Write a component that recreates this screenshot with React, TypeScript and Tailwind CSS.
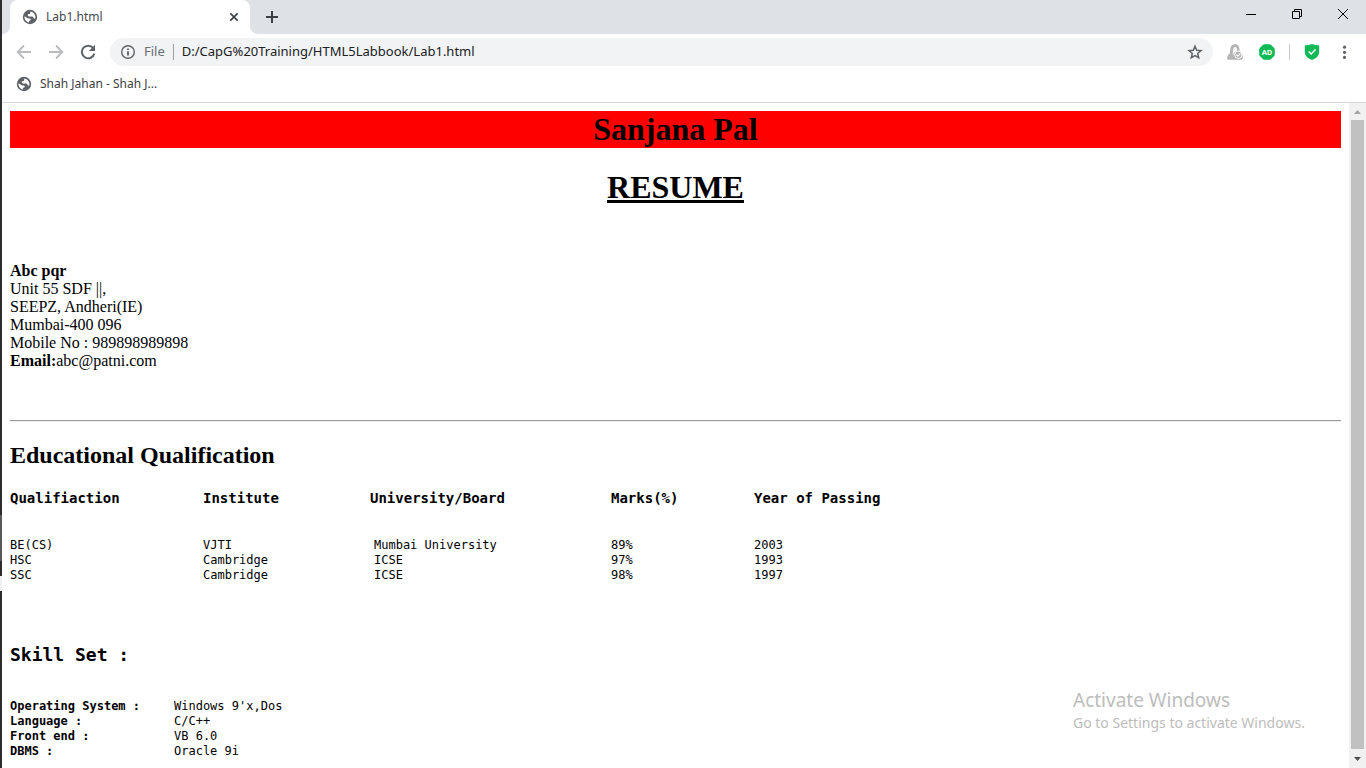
import React from "react";

const ui = "font-['Noto_Sans','Open_Sans',sans-serif]";
const serif = "font-['Liberation_Serif',serif]";
const mono = "font-['DejaVu_Sans_Mono',monospace]";

function Globe() {
  return (
    <svg width="16" height="16" viewBox="0 0 16 16" aria-hidden="true" className="shrink-0">
      <circle cx="8" cy="8" r="7.2" fill="#5f6368" />
      <path
        d="M8.400 2.500c-.3.700-.2 1.200-.2 1.700 0 .6-.4.900-1.100.9-.8 0-1.200.4-1.300 1-.1.700.4 1.400 1.200 1.400h2.500c1.100 0 1.700.3 2 1.200.2.700.9 1.100 1.700.9.3-.8.300-1.700.1-2.600-.7-2.700-2.800-4.300-4.900-4.500zM2.500 7.300c-.3 3.400 2 5.900 4.500 6.200 0-1.400.1-1.800.7-1.900.6-.1.900-.3 1-.9.100-.7-.4-1.300-1.200-1.300h-1c-.6 0-.8-.2-1.300-.5z"
        fill="#fff"
      />
    </svg>
  );
}

function Arrow({ flip }: { flip?: boolean }) {
  return (
    <svg width="16" height="16" viewBox="0 0 16 16" fill="none" stroke="#babcbe" strokeWidth="1.9" aria-hidden="true" className={flip ? "rotate-180" : ""}>
      <path d="M15 8H2.500M8 1.500 1.700 8 8 14.500" />
    </svg>
  );
}

function TabStrip() {
  return (
    <header className="flex h-[34px] shrink-0 items-stretch bg-[#dee1e6]">
      <div className="w-2 shrink-0 bg-white">
        <div className="h-full rounded-br-lg bg-[#dee1e6]" />
      </div>
      <div className="flex w-60 shrink-0 items-center gap-2 rounded-t-lg bg-white pr-2 pl-3">
        <Globe />
        <span className="flex-1 text-xs text-[#45494d]">Lab1.html</span>
        <button aria-label="Close tab" className="flex size-4 items-center justify-center">
          <svg width="8" height="8" viewBox="0 0 8 8" stroke="#3c4043" strokeWidth="1.600" aria-hidden="true">
            <path d="M.3.3l7.400 7.400M7.700.3L.3 7.700" />
          </svg>
        </button>
      </div>
      <div className="w-2 shrink-0 bg-white">
        <div className="h-full rounded-bl-lg bg-[#dee1e6]" />
      </div>
      <button aria-label="New tab" className="flex w-7 items-center justify-center">
        <svg width="12" height="12" viewBox="0 0 12 12" stroke="#3c4043" strokeWidth="2" aria-hidden="true">
          <path d="M6 0v12M0 6h12" />
        </svg>
      </button>
      <div className="ml-auto flex h-7">
        <button aria-label="Minimize" className="flex w-[46px] items-center justify-center">
          <svg width="10" height="10" viewBox="0 0 10 10" stroke="#000" aria-hidden="true">
            <path d="M0 5.500h10" />
          </svg>
        </button>
        <button aria-label="Restore" className="flex w-[46px] items-center justify-center">
          <svg width="10" height="10" viewBox="0 0 10 10" fill="none" stroke="#000" aria-hidden="true">
            <path d="M.5 2.500h7v7h-7zM2.500 2.500v-2h7v7h-2" />
          </svg>
        </button>
        <button aria-label="Close" className="flex w-[46px] items-center justify-center">
          <svg width="10" height="10" viewBox="0 0 10 10" stroke="#000" aria-hidden="true">
            <path d="M0 0l10 10M10 0L0 10" />
          </svg>
        </button>
      </div>
    </header>
  );
}

function Toolbar() {
  return (
    <div className="flex h-9 shrink-0 items-center px-3.5">
      <div className="flex items-center gap-4">
        <button aria-label="Back"><Arrow /></button>
        <button aria-label="Forward"><Arrow flip /></button>
        <button aria-label="Reload">
          <svg width="16" height="16" viewBox="0 0 16 16" aria-hidden="true">
            <path d="M13.200 4.200A6.300 6.300 0 1 0 14.300 9.500" fill="none" stroke="#5f6368" strokeWidth="2" />
            <path d="M15 .8V7H8.800z" fill="#5f6368" />
          </svg>
        </button>
      </div>
      <div className="ml-3.5 flex h-7 flex-1 items-center rounded-full bg-[#f1f3f4] px-2.5">
        <svg width="16" height="16" viewBox="0 0 16 16" aria-hidden="true" className="shrink-0">
          <circle cx="8" cy="8" r="6.300" fill="none" stroke="#5f6368" strokeWidth="1.400" />
          <path d="M7.100 7.200h1.800v4.300H7.100zM7.100 4.500h1.800V6.100H7.100z" fill="#5f6368" />
        </svg>
        <label htmlFor="address" className="ml-2 text-[13px] text-[#6b6f73]">File</label>
        <span className="mx-2 h-4 w-px bg-[#9aa0a6]" />
        <input
          id="address"
          type="text"
          defaultValue="D:/CapG%20Training/HTML5Labbook/Lab1.html"
          className="min-w-0 flex-1 bg-transparent text-[13px] text-[#202124] outline-none"
        />
        <button aria-label="Bookmark this page">
          <svg width="16" height="16" viewBox="0 0 16 16" fill="none" stroke="#5f6368" strokeWidth="1.500" aria-hidden="true">
            <path d="M8 2.200l1.700 4 4.300.4-3.300 2.900 1 4.200L8 11.500l-3.700 2.200 1-4.200L2 6.600l4.300-.4z" />
          </svg>
        </button>
      </div>
      <div className="ml-3.5 flex items-center">
        <button aria-label="Notifications extension">
          <svg width="16" height="16" viewBox="0 0 16 16" aria-hidden="true">
            <path d="M8 0C5.200 0 3.600 2.300 3.300 5L2.800 9.500C1.200 10.500.1 12 .1 14.300c0 .8.600 1.500 1.400 1.500H14c1 0 1.700-.6 1.700-1.500V11l-3-2-.2-4C12.200 2.300 10.800 0 8 0z" fill="#b5b5b5" />
            <path d="M8.300 3c1 0 1.500 1 1.600 2.300l.1 1.200-2.900 2.300L6 11.500 5.700 9l.6-3.700C6.500 4 7.200 3 8.300 3z" fill="#fff" />
            <circle cx="11.300" cy="10.700" r="3.700" fill="#b5b5b5" stroke="#fff" strokeWidth="1" />
            <path d="M9.400 10.700l1.500 1.500 2.600-2.800" fill="none" stroke="#fff" strokeWidth="1.200" />
          </svg>
        </button>
        <button aria-label="Ad blocker" className="ml-4">
          <svg width="16" height="16" viewBox="0 0 16 16" aria-hidden="true">
            <path d="M5.500.2h5q.8 0 1.400.6l3.300 3.300q.6.600.6 1.400v5q0 .8-.6 1.400l-3.300 3.300q-.6.600-1.400.6h-5q-.8 0-1.400-.6L.8 11.900q-.6-.6-.6-1.400v-5q0-.8.600-1.400L4.100.8Q4.700.2 5.500.2z" fill="#0fb955" />
            <text x="8" y="10.800" textAnchor="middle" fontSize="7.500" fontWeight="700" fill="#fff">AD</text>
          </svg>
        </button>
        <span className="mx-3.5 h-4 w-px bg-[#c8cace]" />
        <button aria-label="Security shield">
          <svg width="16" height="16" viewBox="0 0 16 16" aria-hidden="true">
            <path d="M8 0c2 .9 4.500 1.300 7.200 1.300v6.200c0 4-2.700 7-7.200 8.500-4.500-1.500-7.200-4.500-7.200-8.500V1.300C3.500 1.300 6 .9 8 0z" fill="#0fb955" />
            <path d="M4.600 7.500l2.500 2.500 4.400-4.500" fill="none" stroke="#fff" strokeWidth="1.500" />
          </svg>
        </button>
        <button aria-label="Menu" className="ml-4">
          <svg width="16" height="16" viewBox="0 0 16 16" fill="#5f6368" aria-hidden="true">
            <circle cx="8.500" cy="3.200" r="1.600" />
            <circle cx="8.500" cy="8.300" r="1.600" />
            <circle cx="8.500" cy="13.400" r="1.600" />
          </svg>
        </button>
      </div>
    </div>
  );
}

const qualifications = [
  ["BE(CS)", "VJTI", "Mumbai University", "89%", "2003"],
  ["HSC", "Cambridge", "ICSE", "97%", "1993"],
  ["SSC", "Cambridge", "ICSE", "98%", "1997"],
];

const skills = [
  ["Operating System :", "Windows 9'x,Dos"],
  ["Language :", "C/C++"],
  ["Front end :", "VB 6.0"],
  ["DBMS :", "Oracle 9i"],
];

function Resume() {
  return (
    <main className={`min-w-0 flex-1 overflow-hidden p-2 text-base leading-[18px] text-black ${serif}`}>
      <h1 className="bg-[#ff0000] text-center text-[32px] leading-[37px] font-bold">Sanjana Pal</h1>
      <h1 className="mt-[21px] text-center text-[32px] leading-[37px] font-bold underline">RESUME</h1>
      <address className="mt-14 not-italic">
        <b>Abc pqr</b>
        <br />
        Unit 55 SDF ||,
        <br />
        SEEPZ, Andheri(IE)
        <br />
        Mumbai-400 096
        <br />
        Mobile No : 989898989898
        <br />
        <b>Email:</b>abc@patni.com
      </address>
      <hr className="mt-[50px] border-t border-b border-t-[#9a9a9a] border-b-[#eeeeee]" />
      <h2 className="mt-5 text-2xl leading-[27px] font-bold">Educational Qualification</h2>
      <table className={`mt-[21px] table-fixed border-collapse text-left text-xs leading-[15px] ${mono}`}>
        <colgroup>
          <col className="w-[193px]" />
          <col className="w-[167px]" />
          <col className="w-[241px]" />
          <col className="w-[143px]" />
          <col className="w-[140px]" />
        </colgroup>
        <thead className="text-sm leading-4">
          <tr>
            {["Qualifiaction", "Institute", "University/Board", "Marks(%)", "Year of Passing"].map((h) => (
              <th key={h} scope="col" className="p-0 pb-8 font-bold">{h}</th>
            ))}
          </tr>
        </thead>
        <tbody>
          {qualifications.map((row) => (
            <tr key={row[0]}>
              {row.map((cell, i) => (
                <td key={i} className={i === 2 ? "p-0 pl-1" : "p-0"}>{cell}</td>
              ))}
            </tr>
          ))}
        </tbody>
      </table>
      <section className={`mt-[60px] ${mono}`}>
        <h2 className="text-lg leading-6 font-bold">Skill Set :</h2>
        <dl className="mt-8 grid grid-cols-[164px_1fr] text-xs leading-[15px]">
          {skills.map(([name, value]) => (
            <React.Fragment key={name}>
              <dt className="font-bold">{name}</dt>
              <dd>{value}</dd>
            </React.Fragment>
          ))}
        </dl>
      </section>
    </main>
  );
}

function ScrollBar() {
  return (
    <div aria-hidden="true" className="flex w-[17px] shrink-0 flex-col items-center bg-[#f1f1f1]">
      <svg width="17" height="17" viewBox="0 0 17 17" className="shrink-0">
        <path d="M5 11h7L8.500 7z" fill="#a3a3a3" />
      </svg>
      <div className="w-[13px] flex-1 bg-[#c1c1c1]" />
      <svg width="17" height="19" viewBox="0 0 17 19" className="shrink-0">
        <path d="M5 8h7l-3.500 4z" fill="#505050" />
      </svg>
    </div>
  );
}

export default function App() {
  return (
    <div className={`relative flex h-screen overflow-hidden bg-white ${ui}`}>
      <div aria-hidden="true" className="flex w-0.5 shrink-0 flex-col bg-[#2d2d2f]">
        <div className="h-[67%]" />
        <div className="h-[6%] bg-[#58585a]" />
        <div className="h-[2%]" />
        <div className="h-[2%] bg-[#f0f0f0]" />
      </div>
      <div className="flex min-w-0 flex-1 flex-col">
        <TabStrip />
        <Toolbar />
        <nav className="flex h-[33px] shrink-0 items-center border-b border-[#d5d7da] px-3.5 pb-1">
          <a href="#shah-jahan" className="flex items-center gap-2 text-xs text-[#3c4043]">
            <Globe />
            Shah Jahan - Shah J...
          </a>
        </nav>
        <div className="flex min-h-0 flex-1">
          <Resume />
          <ScrollBar />
        </div>
      </div>
      <aside className="pointer-events-none absolute right-[53px] bottom-9 w-60 whitespace-nowrap text-[#bdbdbd]">
        <p className="text-[19px] leading-7">Activate Windows</p>
        <p className="text-sm leading-[18px]">Go to Settings to activate Windows.</p>
      </aside>
    </div>
  );
}
